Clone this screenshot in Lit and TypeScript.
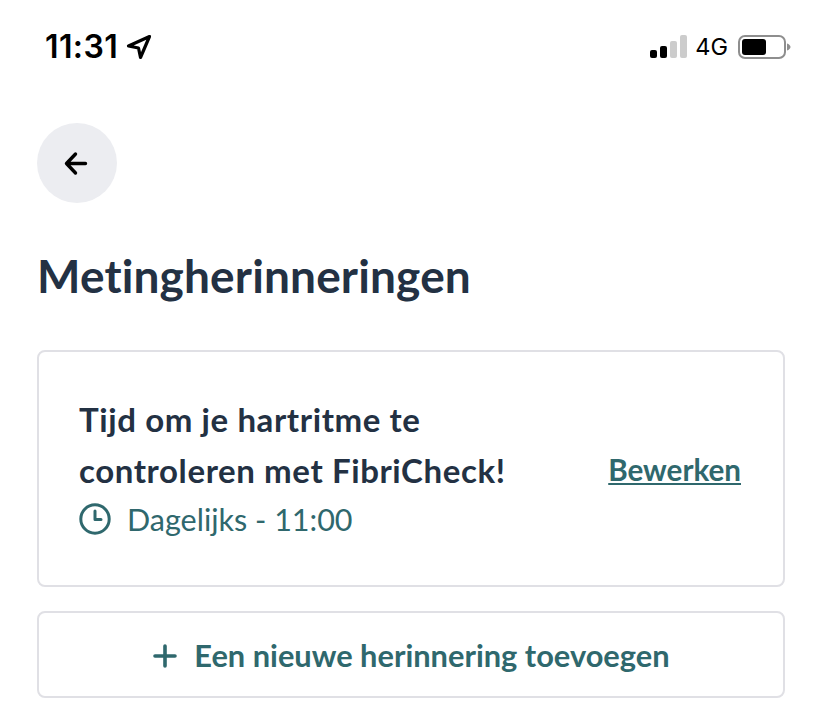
import { LitElement, html, css } from "lit";
import { customElement } from "lit/decorators.js";

@customElement("app-root")
export class AppRoot extends LitElement {
  static styles = css`
    :host { display: block; width: 818px; height: 722px; background: #fff; overflow: hidden; font-family: "Lato", "Liberation Sans", sans-serif; font-variant-ligatures: none; color: #233143; }
    .status { display: flex; justify-content: space-between; align-items: center; height: 40px; padding: 27px 27px 0 45px; }
    .left { display: flex; align-items: center; gap: 8px; }
    .time { font-family: "Inter", "Liberation Sans", sans-serif; font-size: 32px; font-weight: 600; color: #000; letter-spacing: 0.4px; line-height: 40px; }
    .right { display: flex; align-items: center; }
    .net { font-family: "Inter", "Liberation Sans", sans-serif; font-size: 23.5px; color: #000; margin: 0 9px 0 7px; line-height: 40px; }
    .page { padding: 56px 33px 0 37px; display: flex; flex-direction: column; }
    .back { width: 80px; height: 80px; border-radius: 50%; background: #ecedf1; display: flex; align-items: center; justify-content: center; }
    h1 { margin: 46px 0 0; font-size: 46px; line-height: 54px; font-weight: 700; letter-spacing: 0.15px; color: #233143; }
    .card { box-sizing: border-box; height: 237px; margin-top: 47px; border: 2px solid #e0e0e5; border-radius: 8px; padding: 42px 42px 0 40px; display: flex; justify-content: space-between; align-items: flex-start; }
    .title { font-size: 33px; line-height: 51px; font-weight: 700; letter-spacing: 0.6px; color: #233143; }
    .when { display: flex; align-items: center; gap: 16px; font-size: 30.5px; line-height: 46px; color: #2f686d; }
    .edit { font-size: 29.6px; font-weight: 700; color: #2f686d; text-decoration: underline; margin-top: 56px; line-height: 40px; }
    .add { box-sizing: border-box; height: 87px; margin-top: 24px; padding-top: 2px; border: 2px solid #e0e0e5; border-radius: 8px; display: flex; align-items: center; justify-content: center; gap: 16px; font-size: 30.8px; font-weight: 700; color: #2f686d; }
    svg { display: block; }
  `;

  render() {
    return html`
      <div class="status">
        <div class="left">
          <span class="time">11:31</span>
          <svg width="26" height="26" viewBox="0 0 26 26" fill="none" stroke="#000" stroke-width="3.2" stroke-linejoin="round"><path d="M23.5 2.5 2.5 12 12.5 14 14.5 23.5Z"/></svg>
        </div>
        <div class="right">
          <svg width="38" height="24" viewBox="0 0 38 24">
            <rect x="0" y="15" width="7" height="8" rx="2" fill="#000"/>
            <rect x="10" y="11" width="7" height="12" rx="2" fill="#000"/>
            <rect x="20" y="6" width="7" height="17" rx="2" fill="#ccc"/>
            <rect x="30" y="0" width="7" height="23" rx="2" fill="#ccc"/>
          </svg>
          <span class="net">4G</span>
          <svg width="54" height="26" viewBox="0 0 54 26">
            <rect x="2" y="2" width="46" height="22" rx="6" fill="none" stroke="#8e8e8e" stroke-width="2"/>
            <rect x="5" y="5" width="24" height="16" rx="3" fill="#000"/>
            <path d="M50 9.5c2 .6 3.5 2 3.5 3.5s-1.5 2.9-3.5 3.5Z" fill="#8e8e8e"/>
          </svg>
        </div>
      </div>
      <div class="page">
        <div class="back">
          <svg width="28" height="28" viewBox="0 0 28 28" fill="none" stroke="#000" stroke-width="3.4" stroke-linecap="round" stroke-linejoin="round"><path d="M22.5 14.5H4M12.5 5 3.5 14.5l9 9.5"/></svg>
        </div>
        <h1>Metingherinneringen</h1>
        <div class="card">
          <div>
            <div class="title">Tijd om je hartritme te<br />controleren met FibriCheck!</div>
            <div class="when">
              <svg width="32" height="32" viewBox="0 0 32 32" fill="none" stroke="#2f686d" stroke-width="3" stroke-linecap="round" stroke-linejoin="round"><circle cx="16" cy="16" r="14.2"/><path d="M16 8v8.5h6"/></svg>
              <span>Dagelijks - 11:00</span>
            </div>
          </div>
          <span class="edit">Bewerken</span>
        </div>
        <div class="add">
          <svg width="26" height="26" viewBox="0 0 26 26" fill="none" stroke="#2f686d" stroke-width="3.6" stroke-linecap="round"><path d="M13 3v20M3 13h20"/></svg>
          <span>Een nieuwe herinnering toevoegen</span>
        </div>
      </div>
    `;
  }
}
